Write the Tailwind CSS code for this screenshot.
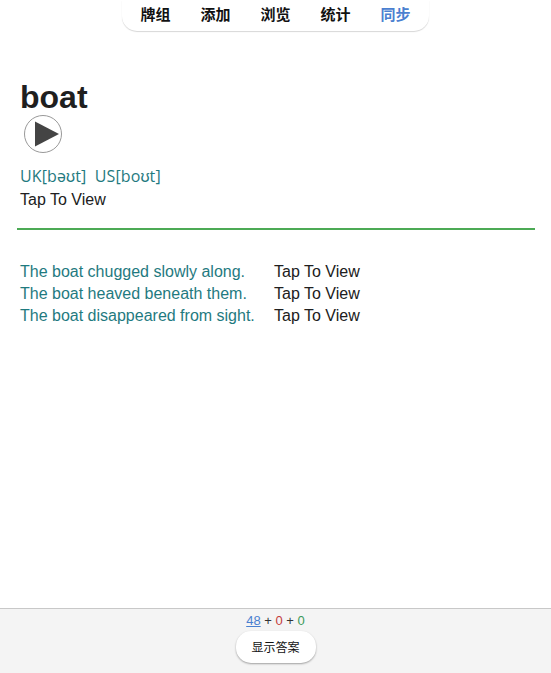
<!DOCTYPE html>
<html lang="zh">

<head>
  <meta charset="UTF-8">
  <title>boat</title>
  <script src="https://cdn.jsdelivr.net/npm/@tailwindcss/browser@4"></script>
</head>

<body class="bg-white h-[673px] overflow-hidden flex flex-col font-['Liberation_Sans','Noto_Sans_CJK_SC',sans-serif] text-[#202020]">

  <!-- Top nav -->
  <div class="flex justify-center h-[31px] shrink-0">
    <div class="w-[307px] h-[31px] flex justify-center gap-[30px] pt-[5px] rounded-b-[15px] shadow-[0_1px_1px_rgba(0,0,0,0.16)] text-[15px] leading-[20px] font-bold text-[#111]">
      <span>牌组</span>
      <span>添加</span>
      <span>浏览</span>
      <span>统计</span>
      <span class="text-[#4a80d0]">同步</span>
    </div>
  </div>

  <!-- Card -->
  <div class="flex-1 pl-[17px] pr-[16px]">
    <div class="px-[3px] pt-[47px]">
      <h1 class="text-[32px] leading-[38px] font-bold text-[#1f1f1f]">boat</h1>
      <button class="block ml-[3px] mt-[-2px] w-[40px] h-[40px]">
        <svg viewBox="0 0 40 40" class="w-[40px] h-[40px]">
          <circle cx="20" cy="20" r="18.5" fill="#fff" stroke="#999" stroke-width="1"></circle>
          <path d="M12 7.5 L36 20 L12 32.5 Z" fill="#444"></path>
        </svg>
      </button>
      <div class="mt-[11px] text-[16px] leading-[22px] tracking-[0.1px] text-[#1f7a7f] font-['Open_Sans','Liberation_Sans',sans-serif]">UK[bəʊt]&nbsp; US[boʊt]</div>
      <div class="mt-[2px] text-[16px] leading-[22px]">Tap To View</div>
    </div>

    <div class="mt-[17px] border-t-2 border-[#4caa55]"></div>

    <div class="mt-[31px] px-[3px] grid grid-cols-[254px_1fr] text-[16px] leading-[22px]">
      <span class="text-[#1f7a7f]">The boat chugged slowly along.</span>
      <span>Tap To View</span>
      <span class="text-[#1f7a7f]">The boat heaved beneath them.</span>
      <span>Tap To View</span>
      <span class="text-[#1f7a7f]">The boat disappeared from sight.</span>
      <span>Tap To View</span>
    </div>
  </div>

  <!-- Bottom bar -->
  <div class="h-[65px] shrink-0 bg-[#f4f4f4] border-t border-[#c8c8c8] flex flex-col items-center">
    <div class="mt-[4px] text-[13px] leading-[15px] text-[#333]">
      <a class="text-[#4a80d0] underline">48</a> + <span class="text-[#c43c3c]">0</span> + <span class="text-[#3a9a5a]">0</span>
    </div>
    <button class="mt-[3px] w-[80px] h-[32px] pt-[1px] rounded-[15px] bg-white text-[12px] text-[#111] shadow-[0_1px_2px_rgba(0,0,0,0.35)]">显示答案</button>
  </div>

</body>

</html>
